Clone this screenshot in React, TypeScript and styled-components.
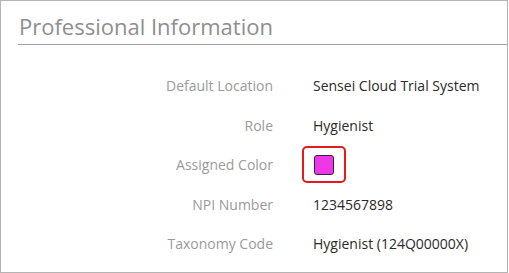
import styled, { createGlobalStyle } from 'styled-components';

const GlobalStyle = createGlobalStyle`
  html, body {
    margin: 0;
    padding: 0;
    background: #ffffff;
  }
  body {
    font-family: 'Open Sans', 'Liberation Sans', sans-serif;
  }
`;

interface InfoRow {
  label: string;
  value?: string;
  color?: string;
}

const rows: InfoRow[] = [
  { label: 'Default Location', value: 'Sensei Cloud Trial System' },
  { label: 'Role', value: 'Hygienist' },
  { label: 'Assigned Color', color: '#ee38e8' },
  { label: 'NPI Number', value: '1234567898' },
  { label: 'Taxonomy Code', value: 'Hygienist (124Q00000X)' },
];

export default function App() {
  return (
    <>
      <GlobalStyle />
      <Panel>
        <Heading>Professional Information</Heading>
        <Rows>
          {rows.map((row) => (
            <Row key={row.label}>
              <Label>{row.label}</Label>
              {row.color ? (
                <ColorFrame>
                  <Swatch $color={row.color} />
                </ColorFrame>
              ) : (
                <Value>{row.value}</Value>
              )}
            </Row>
          ))}
        </Rows>
      </Panel>
    </>
  );
}

const Panel = styled.div`
  width: 508px;
  height: 273px;
  box-sizing: border-box;
  border: 1px solid #b4b4b4;
  padding: 0 0 0 17px;
`;

const Heading = styled.h2`
  margin: 0;
  padding: 11px 0 4px 1px;
  font-size: 22px;
  font-weight: 400;
  line-height: 28px;
  color: #8e8e8e;
  border-bottom: 1px solid #a0a0a0;
`;

const Rows = styled.div`
  display: flex;
  flex-direction: column;
  padding-top: 21px;
`;

const Row = styled.div`
  display: grid;
  grid-template-columns: 255px 1fr;
  column-gap: 40px;
  align-items: center;
  height: 39.5px;
`;

const Label = styled.div`
  text-align: right;
  font-size: 14px;
  color: #9a9a9a;
`;

const Value = styled.div`
  font-size: 14px;
  color: #2a2a2a;
`;

const ColorFrame = styled.div`
  width: 44px;
  height: 37px;
  box-sizing: border-box;
  margin-left: -11px;
  border: 2px solid #e31b1b;
  border-radius: 5px;
  display: flex;
  align-items: center;
  justify-content: center;
`;

const Swatch = styled.div<{ $color: string }>`
  width: 20px;
  height: 20px;
  box-sizing: border-box;
  border: 1px solid #3a2040;
  border-radius: 3px;
  background: ${(p) => p.$color};
`;
